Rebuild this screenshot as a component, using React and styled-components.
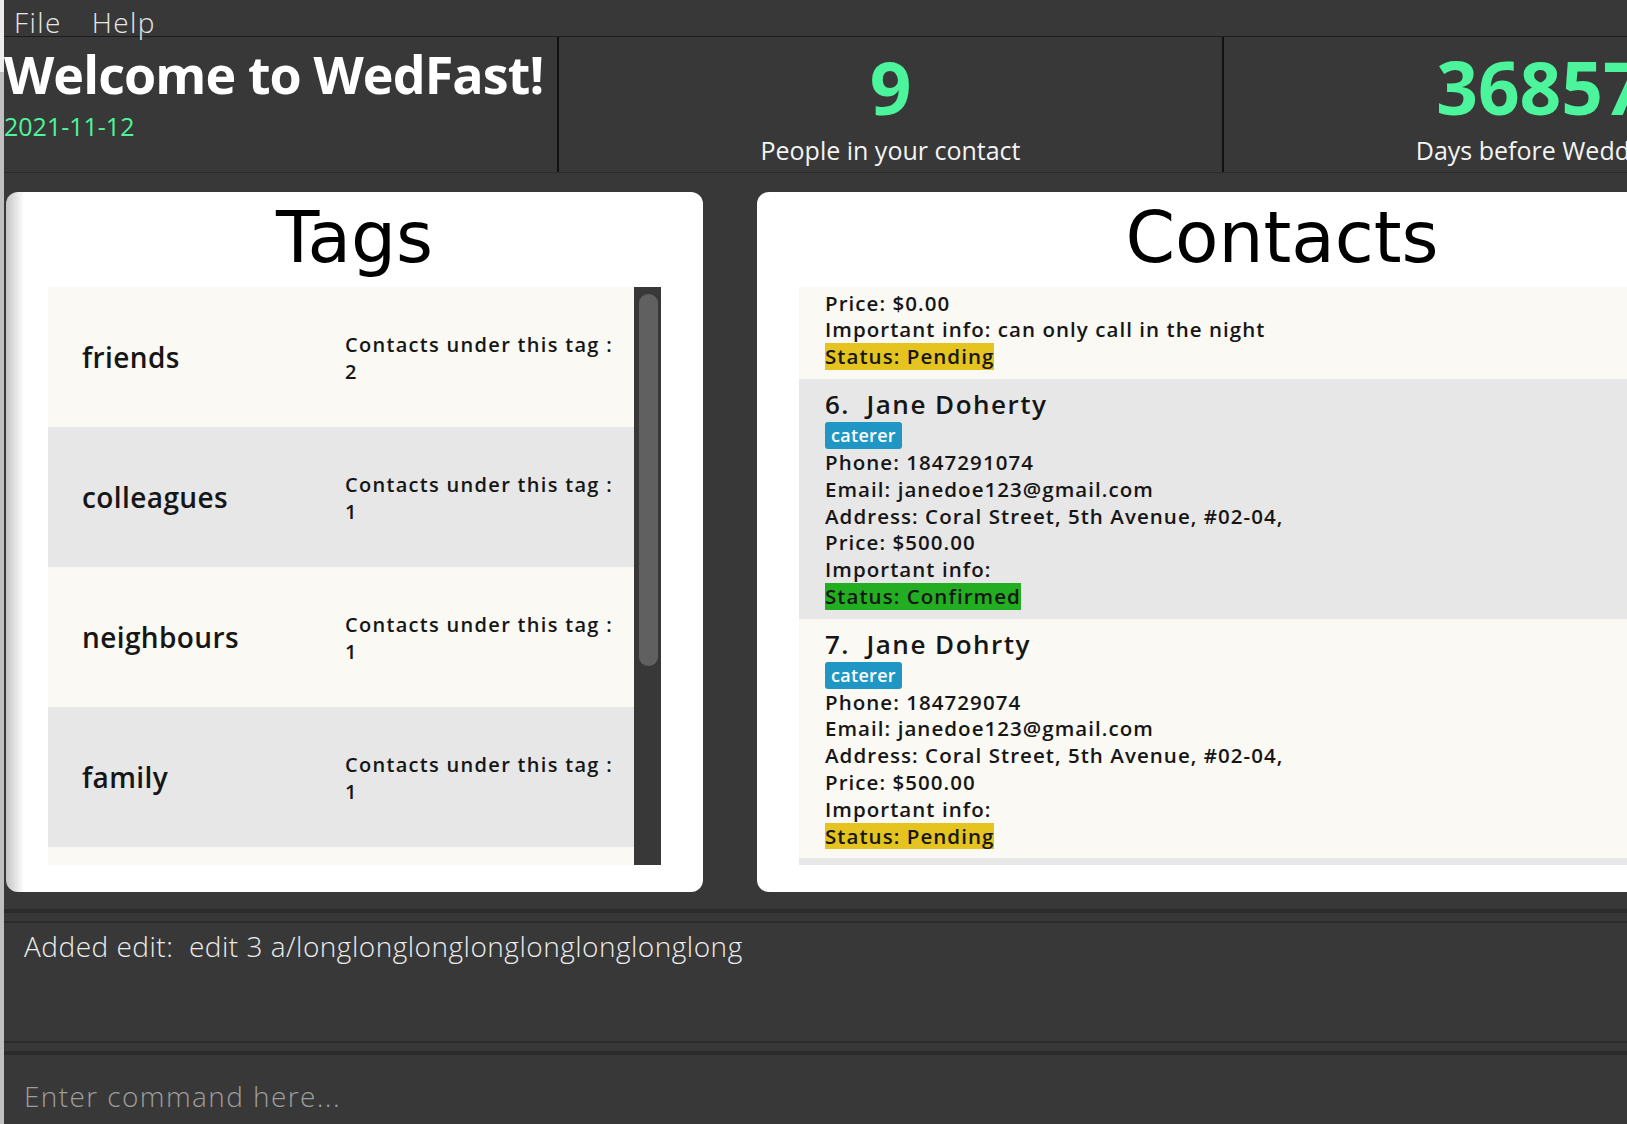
import React, { useLayoutEffect, useRef } from 'react'
import styled, { createGlobalStyle } from 'styled-components'

const GREEN = '#4cf59b'
const DARK = '#383838'
const LINE = '#2b2b2b'
const SANS = "'Open Sans', 'Noto Sans', sans-serif"

const GlobalStyle = createGlobalStyle`
  html, body {
    margin: 0;
    padding: 0;
    background: ${DARK};
    overflow: hidden;
  }
  * {
    box-sizing: border-box;
  }
`

const Page = styled.div`
  display: flex;
  width: 1887px;
  height: 1124px;
  overflow: hidden;
`

const EdgeStrip = styled.div`
  flex: none;
  width: 4px;
  background: linear-gradient(to bottom, #ededed 0, #ededed 72px, #c0c0c0 72px);
`

const Window = styled.div`
  flex: 1;
  display: flex;
  flex-direction: column;
  background: ${DARK};
  font-family: ${SANS};
`

const MenuBar = styled.div`
  flex: none;
  display: flex;
  height: 37px;
  padding-left: 10px;
  border-bottom: 1px solid #1c1c1c;
`

const MenuItem = styled.div`
  font-size: 28px;
  font-weight: 300;
  line-height: 30px;
  padding-top: 7px;
  margin-right: 30px;
  letter-spacing: 1.4px;
  color: #e6e6e6;
`

const Header = styled.div`
  flex: none;
  display: flex;
  height: 136px;
  border-bottom: 1px solid ${LINE};
`

const WelcomeCell = styled.div`
  flex: none;
  width: 555px;
  padding-top: 7px;
  border-right: 2px solid #111;
  overflow: hidden;
  white-space: nowrap;
`

const WelcomeTitle = styled.div`
  font-size: 52px;
  font-weight: 700;
  line-height: 60px;
  color: #fff;
  letter-spacing: -0.9px;
`

const DateText = styled.div`
  margin-top: 7px;
  font-size: 25px;
  line-height: 30px;
  color: ${GREEN};
`

const StatCell = styled.div`
  flex: none;
  width: ${p => p.$width}px;
  display: flex;
  flex-direction: column;
  align-items: center;
  padding-top: 13px;
  border-right: ${p => (p.$divider ? '2px solid #111' : 'none')};
  white-space: nowrap;
`

const StatNumber = styled.div`
  font-size: 73px;
  font-weight: 700;
  line-height: 73px;
  color: ${GREEN};
`

const StatLabel = styled.div`
  margin-top: 12px;
  font-size: 25px;
  line-height: 30px;
  color: #f4f4f4;
`

const Body = styled.div`
  flex: none;
  display: flex;
  gap: 54px;
  padding: 19px 2px 17px;
`

const Card = styled.div`
  flex: none;
  width: ${p => p.$width}px;
  height: 700px;
  display: flex;
  flex-direction: column;
  padding: 10px 42px 27px;
  border-radius: 12px;
  background: ${p =>
    p.$shaded ? 'linear-gradient(to right, #c4c4c4 0, #ffffff 18px)' : '#fff'};
`

const CardTitle = styled.div`
  font-family: 'DejaVu Sans', sans-serif;
  font-size: 71px;
  line-height: 71px;
  text-align: center;
  color: #000;
  margin-bottom: 14px;
`

const ListFrame = styled.div`
  flex: 1;
  min-height: 0;
  display: flex;
`

const List = styled.div`
  flex: 1;
  min-width: 0;
  overflow: hidden;
`

const ScrollTrack = styled.div`
  flex: none;
  width: 27px;
  padding: 7px 3px 0 5px;
  background: ${DARK};
`

const ScrollThumb = styled.div`
  height: ${p => p.$size}px;
  border-radius: 9px;
  background: #606060;
`

const TagRow = styled.div`
  display: flex;
  align-items: center;
  height: 140px;
  padding-left: 34px;
  background: ${p => (p.$odd ? '#faf9f4' : '#e7e7e7')};
  color: #161616;
`

const TagName = styled.div`
  flex: none;
  width: 263px;
  font-size: 28px;
  font-weight: 600;
  line-height: 38px;
  letter-spacing: 0.4px;
`

const TagCount = styled.div`
  padding-top: 3px;
  font-size: 20px;
  font-weight: 600;
  line-height: 26.6px;
  letter-spacing: 1.3px;
`

const ContactRow = styled.div`
  padding: 8px 0 9px 26px;
  background: ${p => (p.$odd ? '#faf9f4' : '#e7e7e7')};
  color: #161616;
`

const ContactName = styled.div`
  font-size: 26px;
  font-weight: 600;
  line-height: 34px;
  letter-spacing: 1.5px;
  white-space: pre;
`

const Badges = styled.div`
  display: flex;
  gap: 5px;
  margin-top: 1px;
`

const Badge = styled.span`
  height: 27px;
  padding: 0 6px;
  border-radius: 3px;
  background: #1f96c3;
  color: #fff;
  font-size: 18px;
  font-weight: 600;
  line-height: 27px;
  letter-spacing: 0.3px;
`

const InfoLine = styled.div`
  font-size: 20.5px;
  font-weight: 600;
  line-height: 26.8px;
  letter-spacing: 1.05px;
  white-space: nowrap;
`

const Status = styled.span`
  display: inline-block;
  background: ${p => (p.$confirmed ? '#23ae22' : '#e5c420')};
`

const Divider = styled.div`
  flex: none;
  height: ${p => p.$top + p.$bottom + 8}px;
  border-top: ${p => p.$top}px solid ${LINE};
  border-bottom: ${p => p.$bottom}px solid ${LINE};
`

const ResultArea = styled.div`
  flex: none;
  height: 118px;
  padding: 5px 20px 0;
  font-size: 28px;
  font-weight: 300;
  line-height: 36px;
  letter-spacing: 0.5px;
  color: #ececec;
  white-space: pre;
`

const CommandBox = styled.div`
  flex: 1;
  padding: 23px 20px 0;
`

const CommandInput = styled.input`
  width: 100%;
  border: none;
  outline: none;
  background: transparent;
  padding: 0;
  font-family: ${SANS};
  font-size: 28px;
  font-weight: 300;
  line-height: 36px;
  height: 36px;
  letter-spacing: 1.4px;
  color: #ececec;
  &::placeholder {
    color: #9d9d9d;
  }
`

const tags = [
  { name: 'friends', count: 2 },
  { name: 'colleagues', count: 1 },
  { name: 'neighbours', count: 1 },
  { name: 'family', count: 1 },
  { name: 'caterer', count: 2 },
  { name: 'florist', count: 1 },
]

const address = 'Coral Street, 5th Avenue, #02-04,'

const contacts = [
  { name: 'Alex Yeoh', tags: ['friends'], phone: '87438807', email: 'alexyeoh@example.com', address: 'Blk 30 Geylang Street 29, #06-40', price: '$1200.00', info: '', confirmed: true },
  { name: 'Bernice Yu', tags: ['colleagues'], phone: '99272758', email: 'berniceyu@example.com', address: 'Blk 30 Lorong 3 Serangoon Gardens, #07-18', price: '$300.00', info: '', confirmed: false },
  { name: 'Charlotte Oliveiro', tags: ['neighbours'], phone: '93210283', email: 'charlotte@example.com', address: 'Blk 11 Ang Mo Kio Street 74, #11-04', price: '$250.00', info: '', confirmed: true },
  { name: 'David Li', tags: ['family'], phone: '91031282', email: 'lidavid@example.com', address: 'Blk 436 Serangoon Gardens Street 26, #16-43', price: '$80.00', info: '', confirmed: false },
  { name: 'Irfan Ibrahim', tags: ['friends'], phone: '92492021', email: 'irfan@example.com', address: 'Blk 80 Marine Drive #04-11', price: '$0.00', info: 'can only call in the night', confirmed: false },
  { name: 'Jane Doherty', tags: ['caterer'], phone: '1847291074', email: 'janedoe123@gmail.com', address, price: '$500.00', info: '', confirmed: true },
  { name: 'Jane Dohrty', tags: ['caterer'], phone: '184729074', email: 'janedoe123@gmail.com', address, price: '$500.00', info: '', confirmed: false },
  { name: 'Roy Balakrishnan', tags: ['florist'], phone: '92624417', email: 'royb@example.com', address: 'Blk 45 Aljunied Street 85, #11-31', price: '$150.00', info: '', confirmed: true },
  { name: 'Tom Lim', tags: ['colleagues'], phone: '81234567', email: 'tomlim@example.com', address: 'Blk 12 Clementi Road, #03-21', price: '$90.00', info: '', confirmed: false },
]

const ContactCard = ({ contact, index }) => (
  <ContactRow $odd={index % 2 === 0}>
    <ContactName>{`${index + 1}.  ${contact.name}`}</ContactName>
    <Badges>
      {contact.tags.map(t => (
        <Badge key={t}>{t}</Badge>
      ))}
    </Badges>
    <InfoLine>Phone: {contact.phone}</InfoLine>
    <InfoLine>Email: {contact.email}</InfoLine>
    <InfoLine>Address: {contact.address}</InfoLine>
    <InfoLine>Price: {contact.price}</InfoLine>
    <InfoLine>Important info: {contact.info}</InfoLine>
    <InfoLine>
      <Status $confirmed={contact.confirmed}>
        Status: {contact.confirmed ? 'Confirmed' : 'Pending'}
      </Status>
    </InfoLine>
  </ContactRow>
)

const App = () => {
  const contactListRef = useRef()

  // scrolled so that only the tail of card 5 shows above card 6
  useLayoutEffect(() => {
    const list = contactListRef.current
    const sixth = list.children[5]
    list.scrollTop = sixth.offsetTop - list.children[0].offsetTop - 92
  }, [])

  return (
    <Page>
      <GlobalStyle />
      <EdgeStrip />
      <Window>
        <MenuBar>
          <MenuItem>File</MenuItem>
          <MenuItem>Help</MenuItem>
        </MenuBar>
        <Header>
          <WelcomeCell>
            <WelcomeTitle>Welcome to WedFast!</WelcomeTitle>
            <DateText>2021-11-12</DateText>
          </WelcomeCell>
          <StatCell $width={665} $divider>
            <StatNumber>9</StatNumber>
            <StatLabel>People in your contact</StatLabel>
          </StatCell>
          <StatCell $width={633}>
            <StatNumber>36857</StatNumber>
            <StatLabel>Days before Wedding</StatLabel>
          </StatCell>
        </Header>
        <Body>
          <Card $width={697} $shaded>
            <CardTitle>Tags</CardTitle>
            <ListFrame>
              <List>
                {tags.map((tag, i) => (
                  <TagRow key={tag.name} $odd={i % 2 === 0}>
                    <TagName>{tag.name}</TagName>
                    <TagCount>
                      <div>Contacts under this tag :</div>
                      <div>{tag.count}</div>
                    </TagCount>
                  </TagRow>
                ))}
              </List>
              <ScrollTrack>
                <ScrollThumb $size={372} />
              </ScrollTrack>
            </ListFrame>
          </Card>
          <Card $width={1050}>
            <CardTitle>Contacts</CardTitle>
            <ListFrame>
              <List ref={contactListRef}>
                {contacts.map((c, i) => (
                  <ContactCard key={c.name} contact={c} index={i} />
                ))}
              </List>
            </ListFrame>
          </Card>
        </Body>
        <Divider $top={4} $bottom={2} />
        <ResultArea>Added edit:  edit 3 a/longlonglonglonglonglonglonglong</ResultArea>
        <Divider $top={2} $bottom={4} />
        <CommandBox>
          <CommandInput placeholder="Enter command here..." />
        </CommandBox>
      </Window>
    </Page>
  )
}

export default App
